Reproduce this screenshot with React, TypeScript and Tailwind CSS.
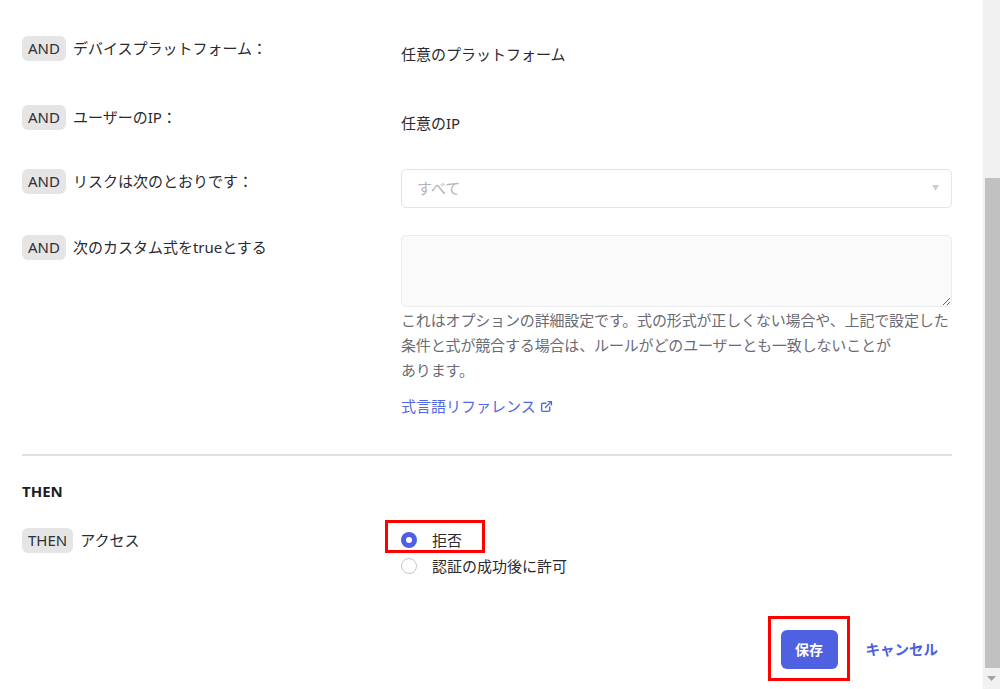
import React from "react";
import { ExternalLink } from "lucide-react";

const Badge = ({ children }: { children: React.ReactNode }) => (
  <span className="inline-flex h-[25px] shrink-0 items-center rounded-[6px] bg-[#e5e5e5] px-[6px] text-[15px] leading-none text-[#303036]">
    {children}
  </span>
);

const Label = ({ badge, text }: { badge: string; text: string }) => (
  <div className="flex items-center gap-[7px]">
    <Badge>{badge}</Badge>
    <span className="text-[15px] leading-[25px] text-[#2a2a30]">{text}</span>
  </div>
);

export default function App() {
  return (
    <div className="flex h-[689px] w-[1000px] overflow-hidden bg-white font-['Noto_Sans','Noto_Sans_CJK_JP',sans-serif]">
      <main className="flex-1 pl-[22px] pr-[31px]">
        {/* Row 1 */}
        <div className="mt-[31px] grid grid-cols-[379px_1fr]">
          <Label badge="AND" text="デバイスプラットフォーム：" />
          <div className="pt-[11px] text-[15px] leading-[24px] text-[#2a2a30]">任意のプラットフォーム</div>
        </div>
        {/* Row 2 */}
        <div className="mt-[34px] grid grid-cols-[379px_1fr]">
          <Label badge="AND" text="ユーザーのIP：" />
          <div className="pt-[11px] text-[15px] leading-[24px] text-[#2a2a30]">任意のIP</div>
        </div>
        {/* Row 3 */}
        <div className="mt-[34px] grid grid-cols-[379px_1fr] items-start">
          <Label badge="AND" text="リスクは次のとおりです：" />
          <div className="flex h-[39px] items-center justify-between rounded-[5px] border border-[#e4e4e6] bg-white pl-[15px] pr-[12px]">
            <span className="text-[15px] text-[#b4b4b8]">すべて</span>
            <span className="text-[7px] text-[#cdcdd0]">▼</span>
          </div>
        </div>
        {/* Row 4 */}
        <div className="mt-[27px] grid grid-cols-[379px_1fr] items-start">
          <Label badge="AND" text="次のカスタム式をtrueとする" />
          <div className="flex flex-col">
            <textarea
              readOnly
              className="block h-[72px] w-full resize-y rounded-[5px] border border-[#ececee] bg-[#fafafa] outline-none"
            />
            <div className="mt-[1px] whitespace-nowrap text-[15px] leading-[25px] tracking-[-0.15px] text-[#6b6b73]">
              <div>これはオプションの詳細設定です。式の形式が正しくない場合や、上記で設定した</div>
              <div>条件と式が競合する場合は、ルールがどのユーザーとも一致しないことが</div>
              <div>あります。</div>
            </div>
            <a className="mt-[11px] flex items-center gap-[4px] text-[15px] leading-[25px] text-[#5468e2]">
              式言語リファレンス
              <ExternalLink size={13} strokeWidth={2.6} />
            </a>
          </div>
        </div>

        <div className="mt-[35px] h-[2px] bg-[#e0e0e2]" />

        <div className="mt-[23px] text-[15px] font-bold leading-[24px] text-[#1d1d21]">THEN</div>

        <div className="mt-[24px] grid grid-cols-[379px_1fr] items-start">
          <div className="pt-[1px]">
            <Label badge="THEN" text="アクセス" />
          </div>
          <div className="flex flex-col">
            <div className="relative flex h-[26px] items-center gap-[15px]">
              <span className="flex h-[16px] w-[16px] items-center justify-center rounded-full bg-[#4e62e1]">
                <span className="h-[6px] w-[6px] rounded-full bg-white" />
              </span>
              <span className="text-[15px] text-[#2a2a30]">拒否</span>
              <div className="pointer-events-none absolute left-[-16px] top-[-7px] h-[33px] w-[100px] border-[3px] border-[#ff0000]" />
            </div>
            <div className="flex h-[26px] items-center gap-[15px]">
              <span className="h-[16px] w-[16px] rounded-full border-[1.5px] border-[#c6c6ca] bg-white" />
              <span className="text-[15px] text-[#2a2a30]">認証の成功後に許可</span>
            </div>
          </div>
        </div>

        <div className="mt-[51px] flex justify-end">
          <div className="relative">
            <button className="flex h-[39px] w-[57px] items-center justify-center rounded-[6px] bg-[#4e62e1] text-[14px] font-bold text-white">
              保存
            </button>
            <div className="pointer-events-none absolute left-[-13px] top-[-14px] h-[65px] w-[82px] border-[3px] border-[#ff0000]" />
          </div>
          <button className="ml-[14px] flex h-[39px] items-center px-[14px] text-[14.5px] font-bold text-[#4d60df]">
            キャンセル
          </button>
        </div>
      </main>

      {/* scrollbar */}
      <div className="flex w-[17px] flex-col bg-[#f1f1f1]">
        <div className="h-[178px]" />
        <div className="ml-[2px] flex-1 bg-[#c1c1c1]" />
        <div className="flex h-[21px] items-center justify-center">
          <svg width="9" height="5" viewBox="0 0 9 5">
            <path d="M0 0 L9 0 L4.5 5 Z" fill="#a3a3a3" />
          </svg>
        </div>
      </div>
    </div>
  );
}
